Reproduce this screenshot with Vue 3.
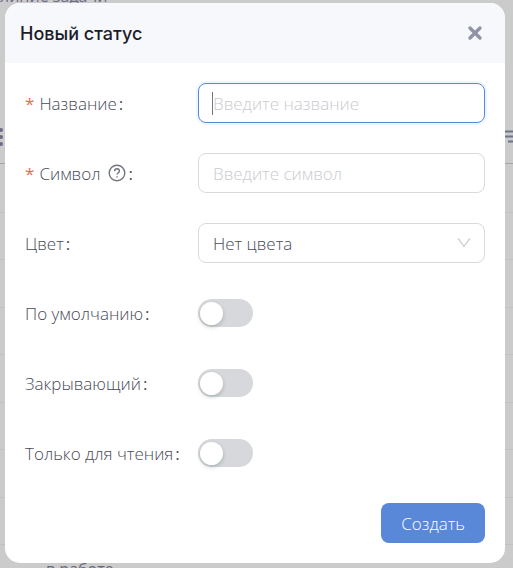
<script setup>
import { reactive } from 'vue'

const form = reactive({
  name: '',
  symbol: '',
  color: 'none'
})

const switches = reactive([
  { id: 'is-default', label: 'По умолчанию', value: false },
  { id: 'is-closing', label: 'Закрывающий', value: false },
  { id: 'is-readonly', label: 'Только для чтения', value: false }
])
</script>

<template>
  <div class="layout">
    <div class="page" aria-hidden="true">
      <div class="page-title">линие задачи</div>
      <div class="page-toolbar">
        <svg class="dots" width="4" height="20" viewBox="0 0 4 20">
          <circle cx="1" cy="3" r="2" />
          <circle cx="1" cy="10" r="2" />
          <circle cx="1" cy="17" r="2" />
        </svg>
        <svg class="lines" width="8" height="14" viewBox="0 0 8 14">
          <path d="M0 1.5h8M0 6.5h8M3 11.5h5" />
        </svg>
      </div>
      <div v-for="n in 8" :key="n" class="page-row"></div>
      <div class="page-cell">в работе</div>
    </div>

    <div class="overlay">
      <section class="modal" role="dialog" aria-labelledby="modal-title">
        <header class="modal-header">
          <h2 id="modal-title" class="modal-title">Новый статус</h2>
          <button class="close" type="button" aria-label="Закрыть">
            <svg width="16" height="16" viewBox="0 0 16 16">
              <path d="M3 3l10 10M13 3L3 13" />
            </svg>
          </button>
        </header>

        <form class="form" @submit.prevent>
          <div class="form-item">
            <label class="label" for="name">
              <span class="required">*</span>Название<span class="colon">:</span>
            </label>
            <div class="control">
              <input id="name" v-model="form.name" class="input active" type="text" placeholder="Введите название">
              <span class="caret"></span>
            </div>
          </div>

          <div class="form-item">
            <label class="label" for="symbol">
              <span class="required">*</span>Символ
              <svg class="help" width="18" height="18" viewBox="0 0 18 18">
                <circle cx="9" cy="9" r="7.8" />
                <path d="M6.6 7.2c0-1.5 1-2.4 2.4-2.4s2.4.9 2.4 2.2c0 1.7-2.3 1.7-2.3 3.6" />
                <path d="M9 12.2v1.4" />
              </svg>
              <span class="colon">:</span>
            </label>
            <div class="control">
              <input id="symbol" v-model="form.symbol" class="input" type="text" placeholder="Введите символ">
            </div>
          </div>

          <div class="form-item">
            <label class="label" for="color">Цвет<span class="colon">:</span></label>
            <div class="control">
              <select id="color" v-model="form.color" class="input select">
                <option value="none">Нет цвета</option>
              </select>
              <svg class="arrow" width="14" height="12" viewBox="0 0 14 12">
                <path d="M1.2 1.5L7 9.6l5.8-8.1" />
              </svg>
            </div>
          </div>

          <div v-for="item in switches" :key="item.id" class="form-item">
            <label class="label" :for="item.id">{{ item.label }}<span class="colon">:</span></label>
            <div class="control">
              <input :id="item.id" v-model="item.value" class="switch" type="checkbox" role="switch">
            </div>
          </div>

          <footer class="footer">
            <button class="submit" type="submit">Создать</button>
          </footer>
        </form>
      </section>
    </div>
  </div>
</template>

<style>
body {
  background: #cbcbcb;
}
</style>

<style scoped>
.layout {
  position: relative;
  height: 100vh;
  overflow: hidden;
  font-family: 'Open Sans', 'Noto Sans', sans-serif;
  font-size: 17px;
  font-weight: 300;
  color: #484b57;
}

/* Страница под окном */
.page {
  font-weight: 400;
  color: #666977;
}

.page-title {
  box-sizing: border-box;
  height: 124px;
  margin-top: -14px;
  font-size: 16px;
  line-height: 20px;
  color: #6d6e85;
}

.page-toolbar {
  display: flex;
  justify-content: space-between;
  align-items: center;
  box-sizing: border-box;
  height: 54px;
  border-bottom: 1px solid #a3a4aa;
}

.dots {
  fill: #696c85;
}

.lines {
  fill: none;
  stroke: #6f7385;
  stroke-width: 2;
}

.page-row {
  box-sizing: border-box;
  height: 47px;
  border-bottom: 1px solid #c0c1c2;
}

.page-row:nth-child(odd) {
  height: 48px;
}

.page-row:nth-child(3) {
  height: 49px;
}

.page-cell {
  padding: 13px 46px;
  font-size: 16px;
  line-height: 22px;
}

.overlay {
  position: absolute;
  inset: 0;
  padding: 3px 8px 5px 5px;
}

.modal {
  overflow: hidden;
  border-radius: 15px;
  background: #fff;
}

.modal-header {
  display: flex;
  align-items: center;
  justify-content: space-between;
  height: 60px;
  padding: 0 15px;
  background: #f6f8fc;
}

.modal-title {
  margin: 0;
  font-family: Inter, sans-serif;
  font-size: 18px;
  font-weight: 500;
  color: #1d1d29;
}

.close {
  display: flex;
  padding: 7px;
  border: 0;
  background: none;
  cursor: pointer;
}

.close svg {
  fill: none;
  stroke: #8f93a3;
  stroke-width: 3.4;
  stroke-linecap: round;
}

.form {
  display: grid;
  gap: 30px;
  padding: 20px;
}

.form-item {
  display: grid;
  grid-template-columns: 173px 1fr;
  align-items: center;
  height: 40px;
}

.label {
  display: flex;
  align-items: center;
  white-space: nowrap;
}

.required {
  margin-right: 5px;
  font-weight: 400;
  color: #e0714d;
}

.colon {
  margin-left: 2px;
  font-weight: 400;
}

.help {
  margin-left: 8px;
  fill: none;
  stroke: #72757f;
  stroke-width: 1.4;
}

.control {
  position: relative;
  display: flex;
  align-items: center;
}

.input {
  box-sizing: border-box;
  width: 100%;
  height: 40px;
  padding: 0 14px;
  border: 1px solid #d8d9dc;
  border-radius: 8px;
  outline: none;
  background: #fff;
  font: inherit;
  color: #484b57;
}

.input::placeholder {
  color: #c9cbd0;
  opacity: 1;
}

.input.active,
.input:focus {
  border-color: #5988d8;
  box-shadow: 0 0 0 2px #edf6ff;
}

.caret {
  position: absolute;
  left: 14px;
  width: 1px;
  height: 23px;
  background: #72757f;
}

.select {
  appearance: none;
}

.arrow {
  position: absolute;
  right: 14px;
  fill: none;
  stroke: #d0d2d7;
  stroke-width: 1.4;
  pointer-events: none;
}

.switch {
  appearance: none;
  display: flex;
  align-items: center;
  width: 55px;
  height: 28px;
  margin: 0;
  padding: 0 2px;
  border-radius: 14px;
  background: #d6d8dc;
  cursor: pointer;
}

.switch::before {
  content: '';
  width: 23px;
  height: 23px;
  border-radius: 50%;
  background: #fff;
  box-shadow: 0 2px 4px rgba(0, 35, 11, 0.2);
}

.switch:checked {
  justify-content: flex-end;
  background: #5988d8;
}

.footer {
  display: flex;
  justify-content: flex-end;
}

.submit {
  height: 40px;
  padding: 0 20px;
  border: 0;
  border-radius: 8px;
  background: #5988d8;
  font: inherit;
  color: #fff;
  cursor: pointer;
}
</style>
